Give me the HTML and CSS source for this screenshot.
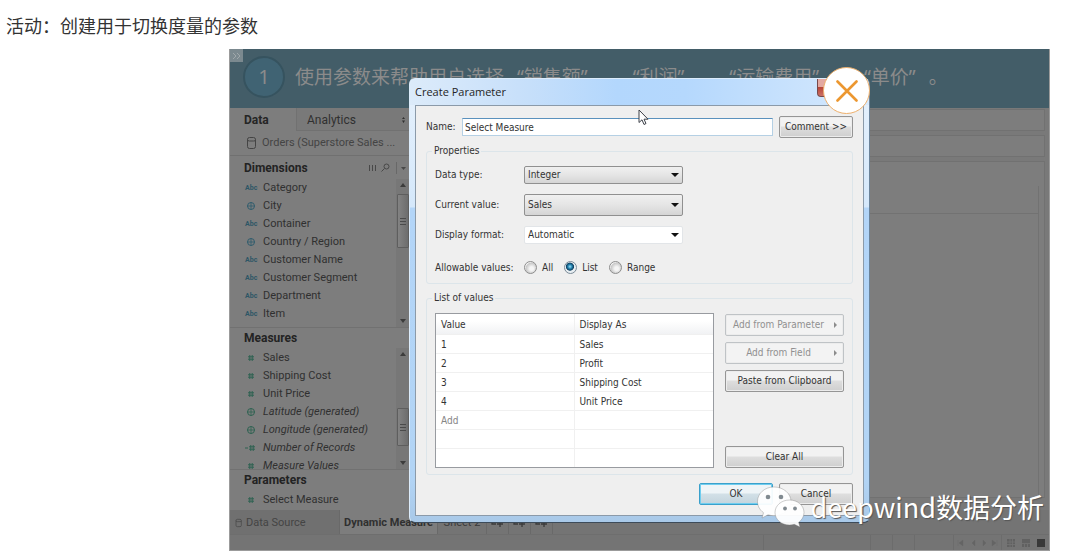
FILE: index.html
```html
<!DOCTYPE html>
<html lang="zh-CN">
<head>
<meta charset="utf-8">
<title>创建用于切换度量的参数</title>
<link rel="stylesheet" href="styles.css">
</head>
<body>
<svg class="defs" width="0" height="0" aria-hidden="true">
  <symbol id="globe" viewBox="0 0 10 10"><g fill="none" stroke="currentColor"><circle cx="5" cy="5" r="3.5"/><path d="M1.5 5h7M5 1.5v7" stroke-width=".8"/></g></symbol>
  <symbol id="hash" viewBox="0 0 10 10"><path d="M3.8 2v6M6.2 2v6M2 3.8h6M2 6.2h6" fill="none" stroke="currentColor" stroke-width="1"/></symbol>
  <symbol id="calc" viewBox="0 0 12 10"><path d="M5.8 2v6M8.2 2v6M4 3.8h6M4 6.2h6M0 5h3" fill="none" stroke="currentColor" stroke-width="1"/></symbol>
  <symbol id="db" viewBox="0 0 12 14"><path d="M1.5 3.5v7q0 2 2 2h4q2 0 2-2v-7M1.5 3.5q0-2 2-2h4q2 0 2 2t-2 1.500h-4q-2 0-2-1.500z" fill="none" stroke="currentColor"/></symbol>
  <symbol id="add-sheet" viewBox="0 0 14 10"><path d="M1 3h6M1 3v3h4M9 3v6M6 6h6" fill="none" stroke="currentColor" stroke-width="1.3"/></symbol>
</svg>
<h1 class="page-title">活动：创建用于切换度量的参数</h1>
<main class="stage">
  <header class="banner">
    <button class="expand" aria-label="Expand"><svg width="9" height="8" viewBox="0 0 9 8"><path d="M1 1l3 3-3 3M5 1l3 3-3 3" fill="none" stroke="currentColor"/></svg></button>
    <span class="step">1</span>
    <p class="lead"><span>使用参数来帮助用户选择</span><span>“销售额”</span><span>、</span><span>“利润”</span><span>、</span><span>“运输费用”</span><span>、</span><span>“单价”</span><span>。</span></p>
  </header>
  <div class="workspace">
    <aside class="sidebar">
      <div class="side-tabs"><button class="side-tab on">Data</button><button class="side-tab">Analytics<svg width="5" height="8" viewBox="0 0 5 8"><path d="M2.500 1l1.500 2h-3zM1 4.500h3L2.500 7z" fill="currentColor"/></svg></button></div>
      <div class="source"><svg width="12" height="14"><use href="#db"/></svg>Orders (Superstore Sales ...</div>
      <section class="pane">
        <h2 class="pane-head">Dimensions<span class="tools"><svg width="38" height="12" viewBox="0 0 38 12"><g fill="none" stroke="currentColor"><path d="M1.500 3v6M4.500 3v6M7.500 3v6"/><circle cx="18.500" cy="4.500" r="2.500"/><path d="M16.500 6.500l-3 3"/><path d="M28.500 0v12" opacity=".4"/></g><path d="M33 5h5l-2.500 3z" fill="currentColor"/></svg></span></h2>
        <div class="scroll-area">
          <ul class="fields dims">
            <li><i class="abc">Abc</i>Category</li>
            <li><svg class="ico"><use href="#globe"/></svg>City</li>
            <li><i class="abc">Abc</i>Container</li>
            <li><svg class="ico"><use href="#globe"/></svg>Country / Region</li>
            <li><i class="abc">Abc</i>Customer Name</li>
            <li><i class="abc">Abc</i>Customer Segment</li>
            <li><i class="abc">Abc</i>Department</li>
            <li><i class="abc">Abc</i>Item</li>
          </ul>
          <div class="bar"><b class="up"></b><span class="thumb first"></span><b class="down"></b></div>
        </div>
      </section>
      <section class="pane measures">
        <h2 class="pane-head">Measures</h2>
        <div class="scroll-area">
          <ul class="fields meas">
            <li><svg class="ico"><use href="#hash"/></svg>Sales</li>
            <li><svg class="ico"><use href="#hash"/></svg>Shipping Cost</li>
            <li><svg class="ico"><use href="#hash"/></svg>Unit Price</li>
            <li class="gen"><svg class="ico"><use href="#globe"/></svg>Latitude (generated)</li>
            <li class="gen"><svg class="ico"><use href="#globe"/></svg>Longitude (generated)</li>
            <li class="gen"><svg class="ico"><use href="#calc"/></svg>Number of Records</li>
            <li class="gen"><svg class="ico"><use href="#hash"/></svg>Measure Values</li>
          </ul>
          <div class="bar"><b class="up"></b><span class="thumb second"></span><b class="down"></b></div>
        </div>
      </section>
      <section class="pane">
        <h2 class="pane-head">Parameters</h2>
        <ul class="fields meas"><li><svg class="ico"><use href="#hash"/></svg>Select Measure</li></ul>
      </section>
    </aside>
    <div class="canvas">
      <div class="shelf"></div>
      <div class="shelf"></div>
      <div class="sheet"><div class="sheet-head"></div><div class="sheet-body"></div></div>
    </div>
  </div>
  <nav class="tabs">
    <button class="tab data"><svg width="8" height="10"><use href="#db"/></svg>Data Source</button>
    <button class="tab on">Dynamic Measure</button>
    <button class="tab">Sheet 2</button>
    <button class="tab add" aria-label="New worksheet"><svg width="14" height="10"><use href="#add-sheet"/></svg></button>
    <button class="tab add" aria-label="New dashboard"><svg width="14" height="10"><use href="#add-sheet"/></svg></button>
    <button class="tab add" aria-label="New story"><svg width="14" height="10"><use href="#add-sheet"/></svg></button>
  </nav>
  <footer class="status">
    <span class="cell wide"></span><span class="cell"></span><span class="cell"></span><span class="cell mid"></span>
    <span class="cell"><svg width="48" height="10" viewBox="0 0 48 10"><path d="M5 5l4-3v6zM4 2v6M18 5l3-3v6zM32 5l-3-3v6zM42 5l-4-3v6zM43 2v6" fill="#646464" stroke="#646464" stroke-width=".4"/></svg></span>
    <span class="cell"><svg width="48" height="10" viewBox="0 0 48 10"><path d="M5 1h8v8H5zM20 1h8v8h-8z" fill="#616161"/><path d="M5 4h8M5 6.500h8M8 1v8M10.500 1v8M20 5.500h8M22.500 6v3M25.500 6v3" stroke="#747474" fill="none" stroke-width=".8"/><path d="M35 1h8v8h-8z" fill="#383838"/></svg></span>
  </footer>

  <form class="dialog" role="dialog" aria-labelledby="dlg-title">
    <div class="titlebar"><h2 id="dlg-title">Create Parameter</h2></div>
    <span class="win-close"></span>
    <div class="client">
      <div class="name-row"><label for="name">Name:</label><input class="text" id="name" type="text" value="Select Measure" autofocus><button class="btn" type="button">Comment &gt;&gt;</button></div>
      <fieldset class="group props">
        <legend>Properties</legend>
        <div class="prop"><label for="dtype">Data type:</label><span class="combo"><select id="dtype"><option>Integer</option></select></span></div>
        <div class="prop"><label for="cur">Current value:</label><span class="combo tall"><select id="cur"><option>Sales</option></select></span></div>
        <div class="prop"><label for="fmt">Display format:</label><span class="combo flat"><select id="fmt"><option>Automatic</option></select></span></div>
        <div class="prop radios"><span class="cap">Allowable values:</span>
          <label><input type="radio" name="allow">All</label>
          <label><input type="radio" name="allow" checked>List</label>
          <label><input type="radio" name="allow">Range</label>
        </div>
      </fieldset>
      <fieldset class="group list">
        <legend>List of values</legend>
        <div class="list-body">
          <table class="values">
            <thead><tr><th>Value</th><th>Display As</th></tr></thead>
            <tbody>
              <tr><td>1</td><td>Sales</td></tr>
              <tr><td>2</td><td>Profit</td></tr>
              <tr><td>3</td><td>Shipping Cost</td></tr>
              <tr><td>4</td><td>Unit Price</td></tr>
              <tr><td class="ghost">Add</td><td></td></tr>
              <tr><td></td><td></td></tr>
              <tr><td></td><td></td></tr>
            </tbody>
          </table>
          <div class="actions">
            <button class="btn more" type="button" disabled>Add from Parameter</button>
            <button class="btn more" type="button" disabled>Add from Field</button>
            <button class="btn" type="button">Paste from Clipboard</button>
            <button class="btn last" type="button">Clear All</button>
          </div>
        </div>
      </fieldset>
      <div class="foot"><button class="btn ok" type="button">OK</button><button class="btn" type="button">Cancel</button></div>
    </div>
    <svg class="cursor" width="11" height="17" viewBox="0 0 11 17"><path d="M1 1v12.500l3-2.700 2 4.700 2-1-2-4.300h4z" fill="#fff" stroke="#3c4048" stroke-width="1"/></svg>
    <button class="dismiss" type="button" aria-label="Close"><svg width="22" height="22" viewBox="0 0 22 22"><path d="M1.500 1.500l19 19M20.500 1.500l-19 19" fill="none" stroke="#ec9730" stroke-width="2.600" stroke-linecap="round"/></svg></button>
  </form>

  <div class="watermark">
    <svg width="50" height="42" viewBox="0 0 50 42"><g fill="#fff" fill-opacity=".94" stroke="#777" stroke-opacity=".45" stroke-width=".8"><path d="M18 1C8.500 1 1.500 7.500 1.500 15.500c0 4.500 2.300 8.500 6 11.200L6 32l6-3.200c2 .6 4 .9 6 .9 9.500 0 17-6.300 17-14.200S27.500 1 18 1z"/><path d="M33.500 14C25.500 14 19 19.500 19 26.500S25.500 39 33.500 39c1.700 0 3.300-.2 4.800-.7L44 41l-1.400-4.600c3.200-2.300 5.400-5.800 5.400-9.900C48 19.500 41.500 14 33.500 14z"/></g><g fill="#818a90"><circle cx="12" cy="11" r="2.300"/><circle cx="25" cy="11" r="2.300"/><circle cx="29" cy="22.500" r="1.900"/><circle cx="39" cy="22.500" r="1.900"/></g></svg>
    <span>deepwind数据分析</span>
  </div>
</main>
</body>
</html>
```
FILE: styles.css
```css
* { box-sizing: border-box; }
body { margin: 0; background: #fff; color: #333; font-family: "Open Sans", "Noto Sans CJK SC", sans-serif; }
h1, h2, p, ul { margin: 0; padding: 0; }
ul { list-style: none; }
button, input, select { font: inherit; color: inherit; margin: 0; }
svg { display: block; flex: none; }
.defs { position: absolute; }

.page-title { padding: 11px 6px 10px; font: 400 18px/28px "Noto Sans CJK SC", sans-serif; color: #333; }
.stage { position: relative; margin: 0 30px 0 229px; background: #7d7d7d; border: 1px solid #9b9b9b; border-width: 0 1px 1px; color: #303030; }

.banner { position: relative; display: flex; align-items: center; gap: 10px; height: 59px; padding: 0 13px 4px; background: #435d68; color: #8b8b8b; }
.expand { position: absolute; left: 0; top: 0; width: 13px; height: 13px; padding: 2px; border: 0; background: #7b898f; color: #a0a8ab; }
.step { display: flex; align-items: center; justify-content: center; flex: none; width: 42px; height: 42px; border: 2px solid #36535f; border-radius: 50%; background: #406373; font: 20px/24px "Noto Sans", sans-serif; }
.lead { display: flex; gap: 13px; white-space: nowrap; font: 19px/28px "Noto Sans", "Noto Sans CJK SC", sans-serif; }

.workspace { display: flex; }
.sidebar { width: 180px; flex: none; font: 11px/18px "Roboto", sans-serif; }
.side-tabs { display: flex; height: 23px; }
.side-tab { border: 0; background: none; padding: 0 0 0 14px; text-align: left; font-size: 12px; }
.side-tab.on { width: 66px; font-weight: 700; color: #252525; }
.side-tab + .side-tab { flex: 1; display: flex; align-items: center; justify-content: space-between; padding: 2px 4px 0 10px; background: #797979; border: 1px solid #717171; border-width: 0 0 1px 1px; }
.source { display: flex; align-items: center; gap: 4px; height: 25px; padding-left: 16px; border-bottom: 1px solid #707070; color: #444; white-space: nowrap; }
.pane-head { display: flex; align-items: center; justify-content: space-between; height: 23px; padding: 0 4px 0 14px; font: 700 12px/18px "Roboto", sans-serif; color: #232323; }
.pane + .pane { border-top: 1px solid #717171; }
.pane + .pane .pane-head { height: 20px; }
.tools { color: #484848; }
.scroll-area { display: flex; height: 148px; overflow: hidden; }
.measures .scroll-area { height: 121px; }
.fields { flex: 1; }
.measures .fields { padding-top: 1px; }
.fields li { display: flex; align-items: center; gap: 6px; height: 18px; padding-left: 15px; white-space: nowrap; }
.fields .abc { width: 12px; font: 700 7px/18px "Roboto", sans-serif; color: #2d5666; }
.ico { width: 12px; height: 10px; }
.dims .ico { color: #2f5c6d; }
.meas .ico { color: #2d6251; }
.fields .gen { font-style: italic; }
.pane:last-child .fields { padding: 1px 0; }
.bar { display: flex; flex-direction: column; align-items: center; width: 14px; padding: 4px 0; background: #777; }
.up, .down { border: 3px solid transparent; }
.up { border-top: 0; border-bottom: 4px solid #3c3c3c; }
.down { border-bottom: 0; border-top: 4px solid #3c3c3c; margin-top: auto; }
.thumb { width: 12px; margin-top: 7px; border: 1px solid #5e5e5e; border-radius: 1px; background: linear-gradient(#4b4b4b 0 1px, transparent 1px 3px, #4b4b4b 3px 4px, transparent 4px 6px, #4b4b4b 6px 7px) center / 6px 7px no-repeat, linear-gradient(90deg, #838383, #6d6d6d); }
.first { height: 54px; }
.second { height: 38px; margin-top: 52px; }

.canvas { flex: 1; display: flex; flex-direction: column; gap: 4px; padding: 1px 4px 0 0; background: #797979; }
.shelf { height: 22px; border: 1px solid #717171; background: #7d7d7d; }
.sheet { flex: 1; margin-bottom: 12px; padding: 24px 5px 0 0; border: 1px solid #717171; background: #7d7d7d; display: flex; flex-direction: column; }
.sheet-head { height: 28px; border: 1px solid #727272; border-width: 0 1px 1px 0; }
.sheet-body { flex: 1; border-right: 1px solid #727272; }

.tabs { display: flex; height: 25px; background: #747474; border-bottom: 1px solid #6e6e6e; font: 11px/18px "Roboto", sans-serif; color: #3a3a3a; }
.tab { display: flex; align-items: center; justify-content: center; border: 0; border-right: 1px solid #696969; padding: 2px 0 0; background: none; width: 49px; white-space: nowrap; }
.tab.data { width: 110px; justify-content: flex-start; gap: 3px; padding-left: 5px; background: #707070; color: #444; }
.tab.on { width: 98px; background: #7d7d7d; font-weight: 700; color: #303030; }
.tab.add { width: 22px; }
.status { display: flex; justify-content: flex-end; height: 15px; background: #747474; }
.cell { display: flex; align-items: center; width: 22px; border-left: 1px solid #6c6c6c; }
.cell.wide { width: 107px; }
.cell.mid { width: 39px; }
.cell:nth-child(n+5) { width: 48px; }

.dialog { position: absolute; left: 179px; top: 29px; width: 461px; padding: 0 5px 6px; border: 1px solid #53677a; border-color: #dcecfb #6c8399 #3d4b59 #dcecfb; border-radius: 6px; background: linear-gradient(#e6f1fc 0, #d5e8fb 128px, #b3d5f8 129px, #b2d4f5 400px, #a9c9e8); font: 10px/14px "DejaVu Sans Condensed", sans-serif; color: #333; }
.titlebar { display: flex; align-items: center; height: 26px; margin: 0 -5px; border-radius: 5px 5px 0 0; background: linear-gradient(90deg, #dcebfa, #c6dffa 26%, #b3d7fd 45%, #b5d8fd 60%, #d6e9fd); }
.titlebar h2 { padding-left: 5px; font: 400 11px/18px "Open Sans", sans-serif; color: #252525; }
.win-close { position: absolute; top: 0; right: 6px; width: 46px; height: 18px; border: 1px solid #77494b; border-top: 0; border-radius: 0 0 4px 4px; background: linear-gradient(#e3a9a2 0 45%, #b84639 50%, #cc7065); }
.client { padding: 10px; border: 1px solid #8b9aa9; background: #efefef; }
.name-row { display: flex; align-items: center; height: 22px; margin-bottom: 6px; }
.name-row label { width: 36px; }
.name-row .btn { width: 74px; }
.text { flex: 1; min-width: 0; height: 18px; margin-right: 6px; padding: 0 2px; border: 1px solid #b5d0e4; border-top-color: #5a91bd; background: #fff; outline: 0; }
.group { margin: 0; padding: 0 8px; border: 1px solid #dce5ea; border-radius: 3px; min-width: 0; }
.group legend { height: 14px; padding: 0 2px; margin-left: -3px; }
.props { padding-top: 2px; margin-bottom: 7px; }
.prop { display: flex; align-items: center; height: 30px; }
.prop > label:first-child, .cap { width: 89px; flex: none; white-space: nowrap; }
.combo { position: relative; display: flex; width: 159px; height: 18px; }
.combo.tall { height: 22px; }
.combo::after { content: ""; position: absolute; right: 4px; top: 50%; margin-top: -2px; border: 4px solid transparent; border-bottom: 0; border-top-color: #111; pointer-events: none; }
.combo select { appearance: none; flex: 1; padding: 0 3px; border: 1px solid #909090; border-radius: 2px; background: linear-gradient(#f0f0f0, #e5e5e5 50%, #d5d5d5); }
.combo.flat select { border-color: #e2e5e8; background: #fff; }
.radios { height: 33px; padding-top: 2px; }
.radios label { display: flex; align-items: center; gap: 5px; margin-right: 11px; }
.radios input { appearance: none; width: 13px; height: 13px; border: 1px solid #8d8d8d; border-radius: 50%; background: radial-gradient(circle at 60% 60%, #f5f5f5 20%, #c8c8c8 60%, #f4f4f4 70%); }
.radios input:checked { border-color: #7b8b98; background: radial-gradient(circle at 45% 42%, #9fe4fa 0, #1e7daa 25%, #12405f 42%, #e8eef2 50%); }
.list { padding: 8px 8px 6px; }
.list-body { display: flex; justify-content: space-between; }
.values { width: 279px; table-layout: fixed; border: 1px solid #989ba0; border-collapse: separate; border-spacing: 0; background: #fff; }
.values th, .values td { height: 19px; padding: 1px 5px 0; border: 1px solid #f0f0f0; border-width: 0 1px 1px 0; text-align: left; font-weight: 400; line-height: 14px; }
.values th { height: 21px; background: linear-gradient(#fff 35%, #f1f2f4); }
.values tr > :last-child { border-right: 0; }
.values tr:last-child td { height: 18px; border-bottom: 0; }
.values .ghost { color: #858585; }
.actions { display: flex; flex-direction: column; gap: 6px; width: 119px; padding-top: 1px; }
.btn { position: relative; height: 22px; padding: 0; border: 1px solid #959595; border-radius: 2px; background: linear-gradient(#f2f2f2 0 45%, #dedede 50%, #cfcfcf); box-shadow: inset 0 0 0 1px #ececec; white-space: nowrap; }
.btn:disabled { border-color: #bfc3c6; background: #f3f3f3; color: #909090; }
.more { padding-right: 12px; }
.more::after { content: ""; position: absolute; right: 6px; top: 7px; border: 3px solid transparent; border-right: 0; border-left-color: #8c8c8c; }
.last { margin-top: auto; }
.foot { display: flex; justify-content: flex-end; gap: 6px; margin-top: 8px; }
.foot .btn { width: 74px; }
.foot .ok { border-color: #3aa0cb; background: linear-gradient(#eef4f7 0 45%, #d2e0e7 50%, #c3d4dd); box-shadow: inset 0 0 0 1px #6fcdef; }
.cursor { position: absolute; left: 228px; top: 30px; }
.dismiss { position: absolute; right: -1px; top: -12px; display: flex; align-items: center; justify-content: center; width: 47px; height: 47px; padding: 0; border: 1px solid #eeb06c; border-radius: 50%; background: #fff; }
.watermark { position: absolute; right: 5px; bottom: 22px; display: flex; align-items: center; gap: 4px; color: #fff; font: 27px/40px "Noto Sans CJK SC", sans-serif; white-space: nowrap; text-shadow: 1px 1px 1px #555; }
```
